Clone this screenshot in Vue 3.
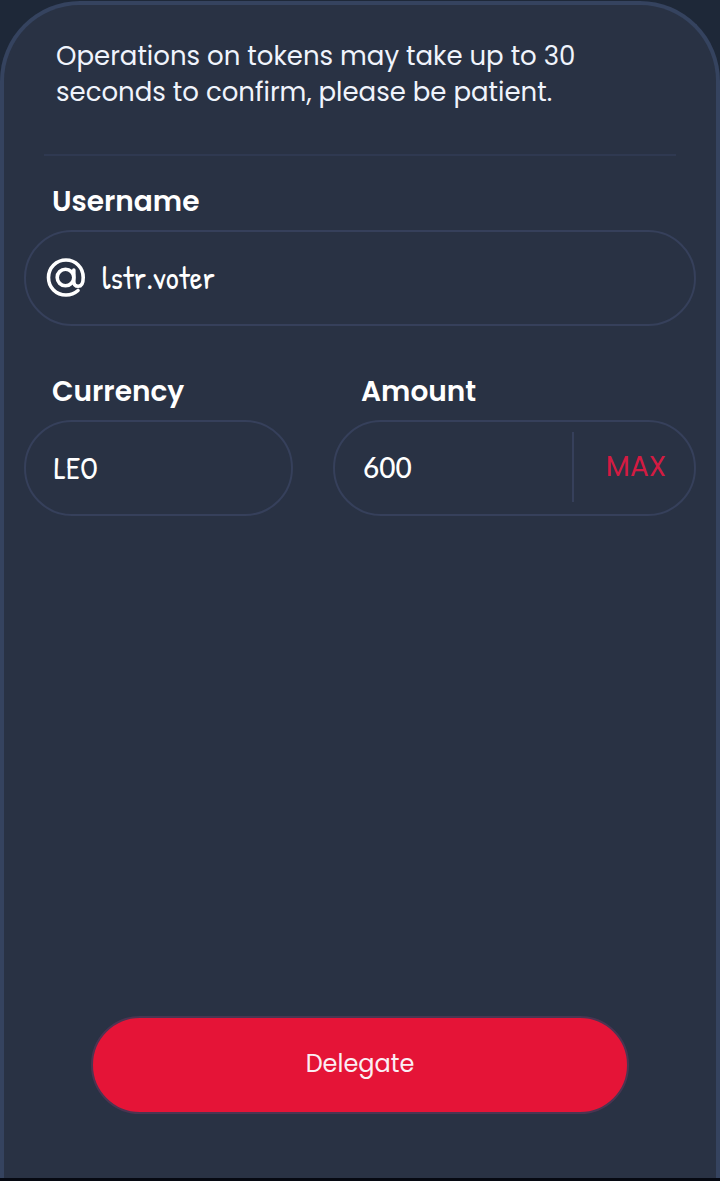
<template>
  <main class="page">
    <form class="sheet" @submit.prevent>
      <p class="notice">Operations on tokens may take up to 30 seconds to confirm, please be patient.</p>
      <hr class="divider" />

      <div class="group">
        <label class="label" for="username">Username</label>
        <div class="field field-user">
          <svg class="at" viewBox="0 0 40 40" fill="none" aria-hidden="true">
            <circle cx="19.5" cy="20.5" r="8.3" />
            <path d="M27.8 13v11.5c0 3 1.7 4.8 4.4 4.8s5-2.8 5-8.8C37.2 10.5 29.5 3 20 3S2.5 10.5 2.5 20.5 10 38 20 38c5 0 9-1.8 12-4.5" />
          </svg>
          <input id="username" v-model="username" class="input" type="text" autocomplete="off" />
        </div>
      </div>

      <div class="row">
        <div class="group">
          <label class="label" for="currency">Currency</label>
          <div class="field">
            <input id="currency" v-model="currency" class="input" type="text" autocomplete="off" />
          </div>
        </div>
        <div class="group">
          <label class="label" for="amount">Amount</label>
          <div class="field field-amount">
            <input id="amount" v-model="amount" class="input input-number" type="text" inputmode="decimal" />
            <button class="max" type="button">MAX</button>
          </div>
        </div>
      </div>

      <button class="submit" type="submit">Delegate</button>
    </form>
  </main>
</template>

<script setup>
import { ref } from 'vue';

const username = ref('lstr.voter');
const currency = ref('LEO');
const amount = ref('600');
</script>

<style>
body {
  background-color: #1e2838;
}
</style>

<style scoped>
.page {
  box-sizing: border-box;
  display: flex;
  min-height: 100vh;
  padding-top: 1px;
  border-bottom: 3px solid #060912;
  font-family: Poppins, Inter, sans-serif;
  color: #fff;
}
.sheet {
  box-sizing: border-box;
  flex: 1;
  min-width: 0;
  display: flex;
  flex-direction: column;
  padding: 33px 20px 64px;
  border: 4px solid #35435f;
  border-bottom: 0;
  border-radius: 80px 80px 0 0;
  background-color: #293244;
}
.notice {
  margin: 0 32px;
  max-width: 560px;
  font-size: 26px;
  line-height: 36px;
  color: #f0f4fc;
}
.divider {
  width: calc(100% - 40px);
  height: 2px;
  margin: 44px auto 26px;
  border: 0;
  background-color: #2f3951;
}
.group {
  display: flex;
  flex-direction: column;
  min-width: 0;
}
.row {
  display: grid;
  grid-template-columns: 269fr 363fr;
  gap: 40px;
  margin-top: 46px;
}
.label {
  margin-left: 28px;
  margin-bottom: 8px;
  font-size: 28px;
  line-height: 40px;
  font-weight: 600;
}
.field {
  box-sizing: border-box;
  display: flex;
  align-items: center;
  height: 96px;
  padding: 0 28px 2px;
  border: 2px solid #36405b;
  border-radius: 48px;
}
.field-user {
  padding-left: 20px;
  gap: 16px;
}
.field-amount {
  padding-right: 0;
}
.at {
  flex: none;
  width: 40px;
  height: 40px;
  stroke: #fff;
  stroke-width: 3.6;
  stroke-linecap: round;
}
.input {
  flex: 1;
  min-width: 0;
  width: 100%;
  padding: 0;
  border: 0;
  outline: 0;
  background: none;
  color: #fff;
  font-family: "Patrick Hand", Lato, sans-serif;
  font-size: 32px;
  font-weight: 600;
}
.input-number {
  font-family: Lato, sans-serif;
  font-size: 28px;
  font-weight: 500;
}
.max {
  flex: none;
  width: 122px;
  height: 70px;
  padding: 0 0 0 4px;
  border: 0;
  border-left: 2px solid #36405b;
  background: none;
  color: #d31b42;
  font-family: inherit;
  font-size: 28px;
}
.submit {
  align-self: center;
  width: 80%;
  height: 98px;
  margin-top: auto;
  padding: 0 0 4px;
  border: 2px solid #4b3552;
  border-radius: 49px;
  background-color: #e51437;
  color: #fbeef4;
  font-family: inherit;
  font-size: 24px;
}
</style>
